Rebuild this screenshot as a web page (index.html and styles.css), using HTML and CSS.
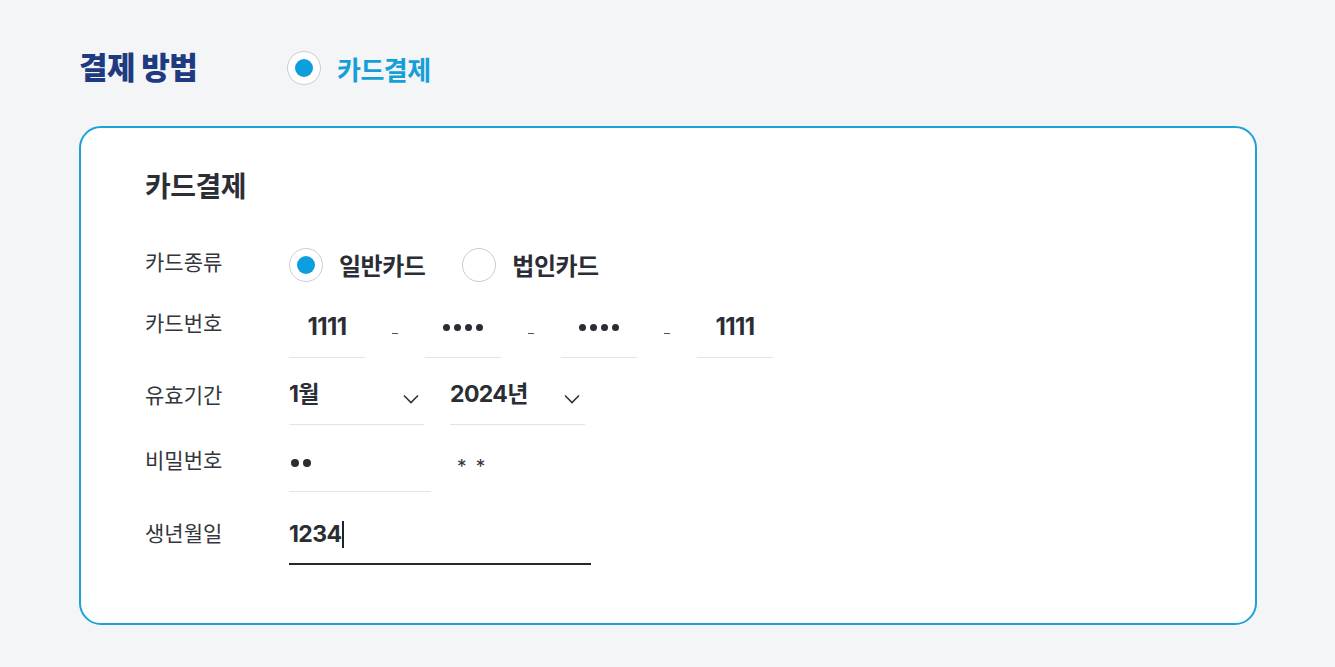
FILE: index.html
```html
<!DOCTYPE html>
<html lang="ko">
<head>
    <meta charset="UTF-8">
    <title>결제 방법</title>
    <link rel="stylesheet" href="styles.css">
</head>
<body>
    <div class="page">
        <div class="method">
            <h2 class="method-title">결제 방법</h2>
            <label class="radio-option">
                <span class="radio checked"></span>
                <span class="method-label">카드결제</span>
            </label>
        </div>

        <div class="card">
            <h3 class="card-title">카드결제</h3>

            <div class="row row-type">
                <div class="label">카드종류</div>
                <div class="radios">
                    <label class="radio-option">
                        <span class="radio checked"></span>
                        <span class="option-text">일반카드</span>
                    </label>
                    <label class="radio-option">
                        <span class="radio"></span>
                        <span class="option-text">법인카드</span>
                    </label>
                </div>
            </div>

            <div class="row row-number">
                <div class="label">카드번호</div>
                <div class="field num">1111</div>
                <div class="dash"></div>
                <div class="field num"><span class="dots"><i></i><i></i><i></i><i></i></span></div>
                <div class="dash"></div>
                <div class="field num"><span class="dots"><i></i><i></i><i></i><i></i></span></div>
                <div class="dash"></div>
                <div class="field num">1111</div>
            </div>

            <div class="row row-expiry">
                <div class="label">유효기간</div>
                <div class="field select">
                    <span>1월</span>
                    <svg class="chevron" width="16" height="10" viewBox="0 0 16 10"><path d="M1 1.5 L8 8.5 L15 1.5" fill="none" stroke="#333" stroke-width="1.6"/></svg>
                </div>
                <div class="field select">
                    <span>2024년</span>
                    <svg class="chevron" width="16" height="10" viewBox="0 0 16 10"><path d="M1 1.5 L8 8.5 L15 1.5" fill="none" stroke="#333" stroke-width="1.6"/></svg>
                </div>
            </div>

            <div class="row row-pass">
                <div class="label">비밀번호</div>
                <div class="field pass"><span class="dots big"><i></i><i></i></span></div>
                <div class="pass-rest">* *</div>
            </div>

            <div class="row row-birth">
                <div class="label">생년월일</div>
                <div class="field birth">1234<span class="caret"></span></div>
            </div>
        </div>
    </div>
</body>
</html>
```

FILE: styles.css
```css
body {
    margin: 0;
    background-color: #f4f5f7;
    font-family: Inter, "Noto Sans CJK KR", sans-serif;
    color: #2a2d33;
}

.page {
    padding: 44px 78px 40px 79px;
}

/* top line */
.method {
    display: flex;
    align-items: center;
    height: 48px;
}

.method-title {
    width: 208px;
    margin: 0;
    font-size: 31px;
    font-weight: 800;
    color: #1e3a80;
    letter-spacing: -0.5px;
    margin-top: -6px;
}

.method-label {
    font-size: 26px;
    font-weight: 700;
    color: #159fd8;
    letter-spacing: -0.5px;
}

.radio-option {
    display: flex;
    align-items: center;
    gap: 16px;
}

.radio {
    width: 32px;
    height: 32px;
    border: 1px solid #c9ccd3;
    border-radius: 50%;
    background: #fff;
    display: flex;
    align-items: center;
    justify-content: center;
}

.radio.checked::after {
    content: "";
    width: 18px;
    height: 18px;
    border-radius: 50%;
    background: #0d9fdd;
}

/* card box */
.card {
    margin-top: 34px;
    height: 499px;
    box-sizing: border-box;
    background: #fff;
    border: 2px solid #1ca2d6;
    border-radius: 22px;
    padding: 42px 64px;
}

.card-title {
    margin: 0;
    font-size: 28px;
    line-height: 34px;
    font-weight: 700;
    color: #2b2e35;
    letter-spacing: -0.5px;
}

.row {
    display: flex;
    align-items: flex-start;
}

.label {
    width: 144px;
    flex: none;
    font-size: 21px;
    line-height: 30px;
    padding-top: 10px;
    color: #33363c;
}

.row-type {
    margin-top: 43px;
    align-items: center;
}

.row-type .label {
    padding-top: 0;
    margin-top: -4px;
}

.radios {
    display: flex;
    gap: 37px;
}

.option-text {
    font-size: 24px;
    font-weight: 700;
    letter-spacing: -0.5px;
}

.field {
    padding: 10px 0 15px;
    line-height: 30px;
    height: 30px;
    font-size: 23px;
    font-weight: 700;
    letter-spacing: -0.6px;
    border-bottom: 1px solid #e2e4e8;
}

.num {
    width: 76px;
    display: flex;
    align-items: center;
    justify-content: center;
    font-size: 24px;
}

.dots {
    display: flex;
    gap: 4px;
}

.dots i {
    width: 7px;
    height: 7px;
    border-radius: 50%;
    background: #2a2d33;
}

.dots.big i {
    width: 8px;
    height: 8px;
}

.dash {
    width: 60px;
    height: 55px;
    display: flex;
    align-items: center;
    justify-content: center;
}

.dash::after {
    content: "";
    width: 6px;
    height: 1px;
    margin-top: 7px;
    background: #555;
}

.row-number {
    margin-top: 20px;
}

.row-number .label {
    padding-top: 7px;
}

.row-expiry {
    margin-top: 11px;
    gap: 0 26px;
}

.row-expiry .label {
    margin-right: -26px;
    padding-top: 12px;
}

.select {
    width: 135px;
    display: flex;
    justify-content: space-between;
    align-items: center;
}

.chevron {
    margin-right: 5px;
    margin-top: 9px;
}

.row-pass {
    margin-top: 11px;
}

.pass {
    display: flex;
    align-items: center;
    padding-left: 2px;
    width: 140px;
    padding-top: 12px;
    padding-bottom: 13px;
}

.pass-rest {
    margin-left: 26px;
    padding-top: 16px;
    line-height: 30px;
    font-size: 19px;
    letter-spacing: 2px;
    color: #333;
}

.row-birth {
    margin-top: 17px;
}

.birth {
    width: 302px;
    border-bottom: 2px solid #25282d;
    padding-bottom: 14px;
    display: flex;
    align-items: center;
}

.caret {
    display: inline-block;
    width: 2px;
    height: 27px;
    background: #222;
    margin-left: 1px;
}
```
